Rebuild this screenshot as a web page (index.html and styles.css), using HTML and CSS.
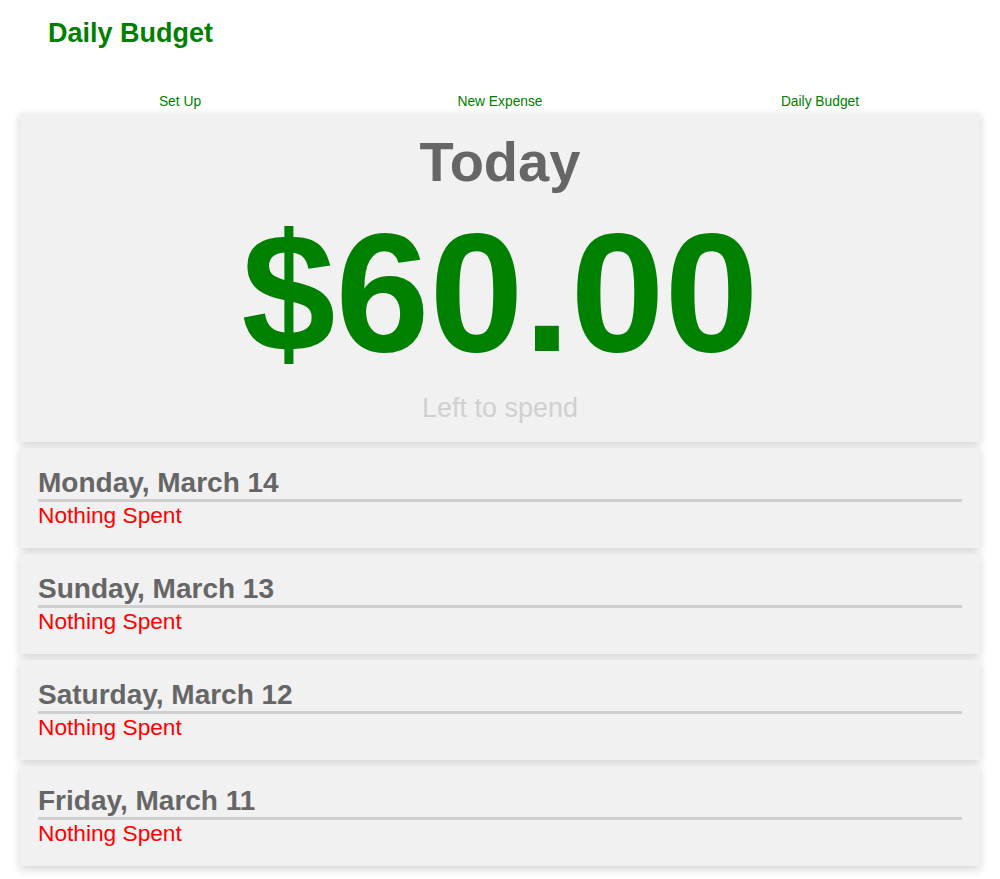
FILE: index.html
```html
<!DOCTYPE html>
<html>
<head>
<meta charset="utf-8">
<title>Daily Budget</title>
<link rel="stylesheet" href="styles.css">
</head>
<body>
<header class="header">
  <h1 class="app-title">Daily Budget</h1>
</header>
<nav class="nav">
  <a class="nav-link" href="#">Set Up</a>
  <a class="nav-link" href="#">New Expense</a>
  <a class="nav-link" href="#">Daily Budget</a>
</nav>
<main class="list">
  <section class="card today">
    <div class="today-label">Today</div>
    <div class="today-amount">$60.00</div>
    <div class="today-sub">Left to spend</div>
  </section>
  <section class="card day">
    <h2 class="day-title">Monday, March 14</h2>
    <p class="day-status">Nothing Spent</p>
  </section>
  <section class="card day">
    <h2 class="day-title">Sunday, March 13</h2>
    <p class="day-status">Nothing Spent</p>
  </section>
  <section class="card day">
    <h2 class="day-title">Saturday, March 12</h2>
    <p class="day-status">Nothing Spent</p>
  </section>
  <section class="card day">
    <h2 class="day-title">Friday, March 11</h2>
    <p class="day-status">Nothing Spent</p>
  </section>
</main>
</body>
</html>
```

FILE: styles.css
```css
html, body {
  margin: 0;
  padding: 0;
  background: #fff;
  font-family: "Liberation Sans", Arial, sans-serif;
}
body {
  padding: 0 20px 12px;
}
.header {
  padding: 18px 0 0 28px;
  height: 76px;
  box-sizing: border-box;
}
.app-title {
  margin: 0;
  font-size: 27px;
  line-height: 31px;
  font-weight: bold;
  color: #008000;
}
.nav {
  display: grid;
  grid-template-columns: 1fr 1fr 1fr;
  height: 37px;
  padding-top: 18px;
  box-sizing: border-box;
}
.nav-link {
  text-align: center;
  font-size: 13.8px;
  line-height: 15px;
  color: #008000;
  text-decoration: none;
}
.list {
  display: flex;
  flex-direction: column;
  gap: 6px;
}
.card {
  background: #f1f1f1;
  box-shadow: 0 3px 9px rgba(0, 0, 0, 0.18);
  box-sizing: border-box;
}
.today {
  height: 329px;
  text-align: center;
  padding-top: 18px;
}
.today-label {
  font-size: 56px;
  line-height: 62px;
  font-weight: bold;
  color: #666;
}
.today-amount {
  font-size: 169px;
  line-height: 168px;
  margin-top: 16px;
  font-weight: bold;
  color: #008000;
}
.today-sub {
  font-size: 27px;
  line-height: 31px;
  margin-top: 16px;
  color: #d0d0d0;
}
.day {
  height: 100px;
  padding: 19px 18px 0;
}
.day-title {
  margin: 0;
  font-size: 28px;
  line-height: 32px;
  font-weight: bold;
  color: #666;
  border-bottom: 3px solid #cfcfcf;
}
.day-status {
  margin: 0;
  font-size: 22.7px;
  line-height: 27px;
  color: #f00;
}
```
